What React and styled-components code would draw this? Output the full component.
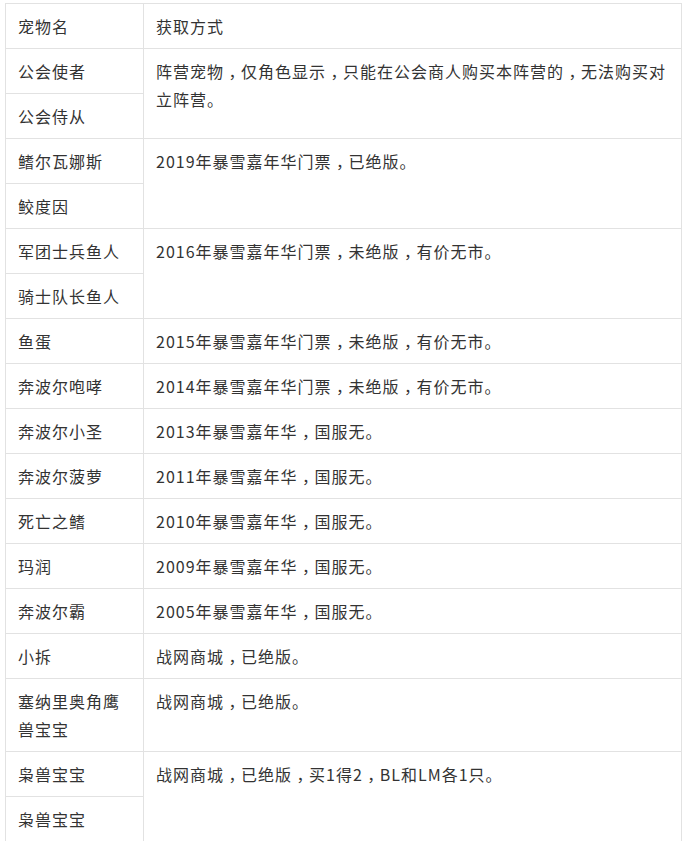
import React from "react";
import styled, { createGlobalStyle } from "styled-components";

const rows = [
  { names: ["公会使者", "公会侍从"], way: "阵营宠物，仅角色显示，只能在公会商人购买本阵营的，无法购买对立阵营。" },
  { names: ["鳍尔瓦娜斯", "鲛度因"], way: "2019年暴雪嘉年华门票，已绝版。" },
  { names: ["军团士兵鱼人", "骑士队长鱼人"], way: "2016年暴雪嘉年华门票，未绝版，有价无市。" },
  { names: ["鱼蛋"], way: "2015年暴雪嘉年华门票，未绝版，有价无市。" },
  { names: ["奔波尔咆哮"], way: "2014年暴雪嘉年华门票，未绝版，有价无市。" },
  { names: ["奔波尔小圣"], way: "2013年暴雪嘉年华，国服无。" },
  { names: ["奔波尔菠萝"], way: "2011年暴雪嘉年华，国服无。" },
  { names: ["死亡之鳍"], way: "2010年暴雪嘉年华，国服无。" },
  { names: ["玛润"], way: "2009年暴雪嘉年华，国服无。" },
  { names: ["奔波尔霸"], way: "2005年暴雪嘉年华，国服无。" },
  { names: ["小拆"], way: "战网商城，已绝版。" },
  { names: ["塞纳里奥角鹰兽宝宝"], way: "战网商城，已绝版。" },
  { names: ["枭兽宝宝", "枭兽宝宝"], way: "战网商城，已绝版，买1得2，BL和LM各1只。" },
];

const GlobalStyle = createGlobalStyle`
  body {
    margin: 0;
    padding: 3px 0 0 5px;
    background: #fff;
  }
`;

const Table = styled.table`
  width: 677px;
  border-collapse: collapse;
  table-layout: fixed;
  font-family: "Noto Sans CJK SC", "Liberation Sans", sans-serif;
  font-size: 16px;
  letter-spacing: 1px;
  color: #333;
`;

const Cell = styled.td`
  border: 1px solid #e2e2e2;
  padding: 8px 12px;
  line-height: 28px;
  vertical-align: top;
  width: ${(p) => (p.$name ? "113px" : "auto")};
  word-break: break-all;
`;

// full-width comma sits in the middle of its box in the original font
const Comma = styled.span`
  display: inline-block;
  width: 17px;
  text-align: center;
  letter-spacing: 0;
  font-feature-settings: "halt";
`;

function Way({ text }) {
  const parts = text.split("，");
  return parts.map((p, i) => (
    <React.Fragment key={i}>
      {p}
      {i < parts.length - 1 && <Comma>，</Comma>}
    </React.Fragment>
  ));
}

export default function App() {
  return (
    <>
      <GlobalStyle />
      <Table>
        <tbody>
          <tr>
            <Cell $name>宠物名</Cell>
            <Cell>获取方式</Cell>
          </tr>
          {rows.map((r, i) =>
            r.names.map((n, j) => (
              <tr key={`${i}-${j}`}>
                <Cell $name>{n}</Cell>
                {j === 0 && (
                  <Cell rowSpan={r.names.length}>
                    <Way text={r.way} />
                  </Cell>
                )}
              </tr>
            ))
          )}
        </tbody>
      </Table>
    </>
  );
}
